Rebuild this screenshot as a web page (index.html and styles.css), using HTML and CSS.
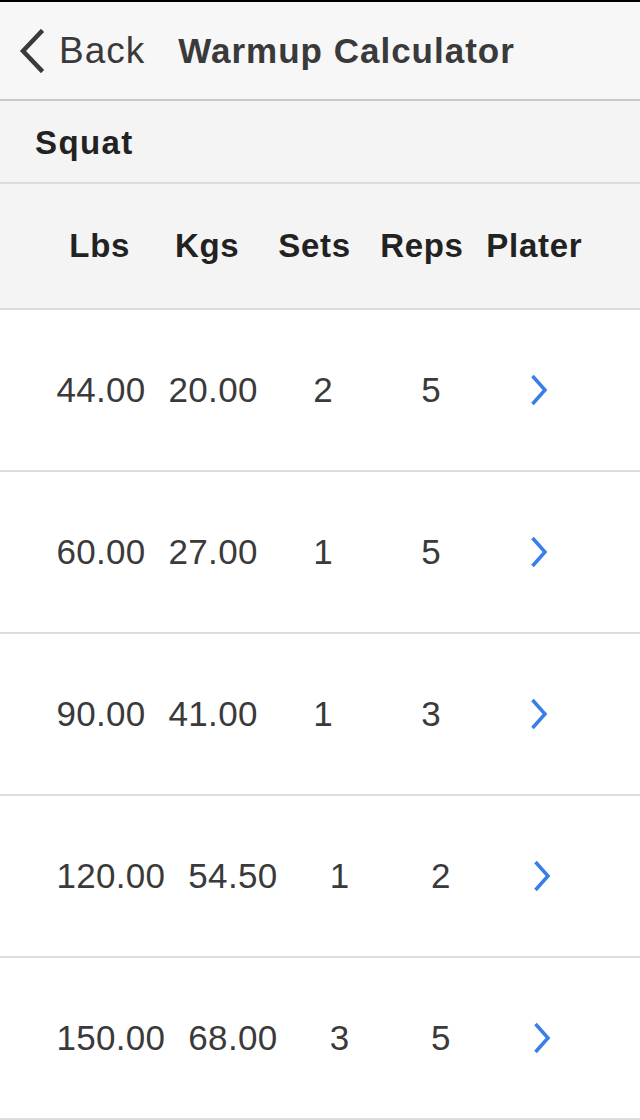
FILE: index.html
```html
<!DOCTYPE html>
<html>
<head>
<meta charset="utf-8">
<link rel="stylesheet" href="styles.css">
</head>
<body>
<div class="topbar"></div>
<header class="navbar">
  <a class="back">
    <svg class="back-icon" width="28" height="44" viewBox="0 0 28 44"><path d="M24 3 L6 22 L24 41" fill="none" stroke="#3a3a3a" stroke-width="4.5" stroke-linecap="square" stroke-linejoin="miter"/></svg>
    <span class="back-label">Back</span>
  </a>
  <h1 class="title">Warmup Calculator</h1>
</header>
<div class="section">Squat</div>
<div class="colhead">
  <div class="hcell">Lbs</div>
  <div class="hcell">Kgs</div>
  <div class="hcell">Sets</div>
  <div class="hcell">Reps</div>
  <div class="hcell last">Plater</div>
</div>
<div class="list">
  <div class="row">
    <div class="cell w">44.00</div><div class="cell w">20.00</div>
    <div class="cell c">2</div><div class="cell c">5</div>
    <div class="cell c"><svg class="chev" width="20" height="32" viewBox="0 0 20 32"><path d="M3.5 2 L16 16 L3.5 30" fill="none" stroke="#3a7ee8" stroke-width="3.5"/></svg></div>
  </div>
  <div class="row">
    <div class="cell w">60.00</div><div class="cell w">27.00</div>
    <div class="cell c">1</div><div class="cell c">5</div>
    <div class="cell c"><svg class="chev" width="20" height="32" viewBox="0 0 20 32"><path d="M3.5 2 L16 16 L3.5 30" fill="none" stroke="#3a7ee8" stroke-width="3.5"/></svg></div>
  </div>
  <div class="row">
    <div class="cell w">90.00</div><div class="cell w">41.00</div>
    <div class="cell c">1</div><div class="cell c">3</div>
    <div class="cell c"><svg class="chev" width="20" height="32" viewBox="0 0 20 32"><path d="M3.5 2 L16 16 L3.5 30" fill="none" stroke="#3a7ee8" stroke-width="3.5"/></svg></div>
  </div>
  <div class="row">
    <div class="cell w">120.00</div><div class="cell w">54.50</div>
    <div class="cell c">1</div><div class="cell c">2</div>
    <div class="cell c"><svg class="chev" width="20" height="32" viewBox="0 0 20 32"><path d="M3.5 2 L16 16 L3.5 30" fill="none" stroke="#3a7ee8" stroke-width="3.5"/></svg></div>
  </div>
  <div class="row">
    <div class="cell w">150.00</div><div class="cell w">68.00</div>
    <div class="cell c">3</div><div class="cell c">5</div>
    <div class="cell c"><svg class="chev" width="20" height="32" viewBox="0 0 20 32"><path d="M3.5 2 L16 16 L3.5 30" fill="none" stroke="#3a7ee8" stroke-width="3.5"/></svg></div>
  </div>
</div>
</body>
</html>
```
FILE: styles.css
```css
html, body {
  margin: 0;
  padding: 0;
  background: #ffffff;
  font-family: "Liberation Sans", Arial, Helvetica, sans-serif;
  color: #333333;
}
.topbar {
  height: 2px;
  background: #000000;
}
.navbar {
  height: 97px;
  background: #f7f7f7;
  border-bottom: 2px solid #cacaca;
  display: flex;
  align-items: center;
  padding-left: 17px;
}
.back {
  display: flex;
  align-items: center;
  gap: 14px;
  color: #3a3a3a;
}
.back-icon {
  display: block;
}
.back-label {
  font-size: 37px;
  letter-spacing: 1px;
}
.title {
  margin: 0 0 0 33px;
  font-size: 35px;
  font-weight: bold;
  color: #3a3a3a;
  letter-spacing: 1px;
}
.section {
  height: 79px;
  padding: 2px 0 0 35px;
  background: #f4f4f4;
  border-bottom: 2px solid #dcdcdc;
  display: flex;
  align-items: center;
  font-size: 33px;
  font-weight: bold;
  letter-spacing: 1.4px;
  color: #222222;
}
.colhead {
  height: 124px;
  background: #f4f4f4;
  border-bottom: 2px solid #dcdcdc;
  display: flex;
  align-items: center;
  padding: 0 47px 0 46px;
  font-size: 33px;
  font-weight: bold;
  letter-spacing: 0.7px;
  color: #222222;
}
.hcell {
  flex: 1;
  text-align: center;
}
.hcell.last {
  flex: 1.093;
}
.row {
  height: 160px;
  border-bottom: 2px solid #dcdcdc;
  display: flex;
  align-items: center;
  padding: 0 47px 0 45px;
  font-size: 35px;
  letter-spacing: 0.3px;
  color: #3a3a3a;
}
.cell.w {
  padding: 0 11.5px;
}
.cell.c {
  flex: 1;
  text-align: center;
}
.chev {
  display: block;
  margin: 0 auto;
}
```
